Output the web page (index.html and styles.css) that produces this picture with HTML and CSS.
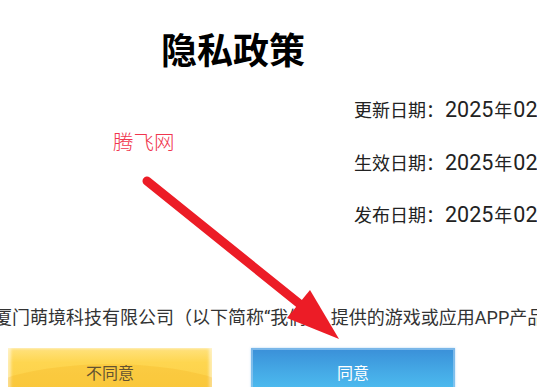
FILE: index.html
```html
<!DOCTYPE html>
<html lang="zh-CN">
<head>
<meta charset="utf-8">
<title>隐私政策</title>
<link rel="stylesheet" href="styles.css">
</head>
<body>
<div class="page">
  <h1 class="title">隐私政策</h1>
  <div class="dates">
    <div class="date">更新日期：<span class="num">2025</span>年<span class="num">02</span>月<span class="num">10</span>日</div>
    <div class="date">生效日期：<span class="num">2025</span>年<span class="num">02</span>月<span class="num">10</span>日</div>
    <div class="date">发布日期：<span class="num">2025</span>年<span class="num">02</span>月<span class="num">10</span>日</div>
  </div>
  <p class="intro">厦门萌境科技有限公司（以下简称“我们”）提供的游戏或应用APP产品</p>
  <div class="actions">
    <button class="btn btn-no">不同意</button>
    <button class="btn btn-yes">同意</button>
  </div>
  <div class="watermark">腾飞网</div>
  <svg class="arrow" width="537" height="387" viewBox="0 0 537 387">
    <line x1="147" y1="181" x2="301" y2="305" stroke="#ec1c26" stroke-width="9" stroke-linecap="round"/>
    <polygon points="310,290 287,318 339,339" fill="#ec1c26"/>
  </svg>
</div>
</body>
</html>
```

FILE: styles.css
```css
html, body {
  margin: 0;
  padding: 0;
  background: #fff;
  overflow: hidden;
}
.page {
  position: relative;
  width: 537px;
  height: 387px;
  overflow: hidden;
  font-family: Roboto, "Noto Sans CJK SC", sans-serif;
  color: #222;
}
.title {
  margin: 0;
  padding: 23px 0 0 161px;
  font-family: "Noto Sans CJK SC", sans-serif;
  font-size: 36px;
  font-weight: 700;
  line-height: 50px;
  height: 50px;
  color: #000;
  white-space: nowrap;
}
.dates {
  margin-top: 12px;
  padding-left: 354px;
  white-space: nowrap;
}
.date {
  font-size: 18px;
  line-height: 52.5px;
  height: 52.5px;
}
.num {
  font-size: 21.5px;
  line-height: 20px;
  padding: 0 1px;
}
.intro {
  margin: 60px 0 0 -6px;
  font-size: 18px;
  line-height: 30px;
  color: #333;
  white-space: nowrap;
}
.actions {
  display: flex;
  gap: 39px;
  margin-top: 15px;
  padding-left: 8px;
}
.btn {
  position: relative;
  overflow: hidden;
  width: 204px;
  height: 48px;
  border: 0;
  padding: 0;
  font-family: "Noto Sans CJK SC", sans-serif;
  font-size: 16px;
  line-height: 48px;
}
.btn-no {
  color: #3a3a3a;
  background: linear-gradient(#ffe27e 0%, #fed650 30%, #fcce44 100%);
  box-shadow: inset 3px 0 3px rgba(255,255,255,0.55), inset -3px 0 3px rgba(255,255,255,0.55);
}
.btn-no::before {
  content: "";
  position: absolute;
  left: -60px;
  right: -60px;
  top: 16px;
  height: 120px;
  border-radius: 50%;
  background: rgba(240, 170, 20, 0.22);
}
.btn-yes {
  color: #fff;
  background: linear-gradient(#3a8fd8 0%, #45aae6 50%, #50c2f2 100%);
  box-shadow: inset 0 0 0 2px rgba(150, 200, 240, 0.7), 0 0 2px rgba(120, 180, 235, 0.6);
}
.watermark {
  position: absolute;
  left: 113px;
  top: 127px;
  font-family: "Noto Sans CJK SC", sans-serif;
  font-weight: 300;
  font-size: 20.5px;
  line-height: 28px;
  color: #f0364e;
}
.arrow {
  position: absolute;
  left: 0;
  top: 0;
}
```
